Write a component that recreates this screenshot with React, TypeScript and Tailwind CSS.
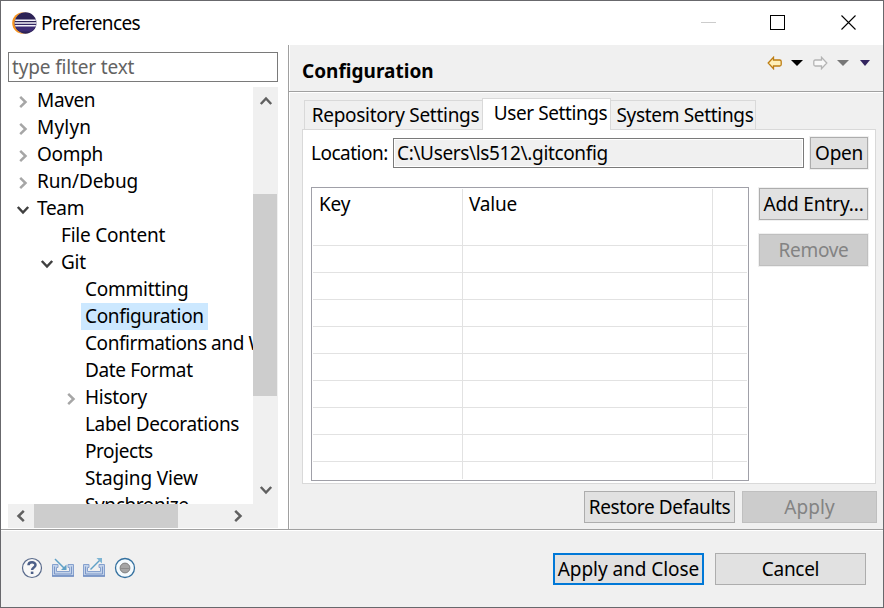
import React from "react";
import clsx from "clsx";

type Row = { label: string; level: 0 | 1 | 2; state?: "open" | "closed"; selected?: boolean; track: string };

const rows: Row[] = [
  { label: "Maven", level: 0, state: "closed", track: "tracking-[-0.35px]" },
  { label: "Mylyn", level: 0, state: "closed", track: "tracking-[0.2px]" },
  { label: "Oomph", level: 0, state: "closed", track: "tracking-[-0.3px]" },
  { label: "Run/Debug", level: 0, state: "closed", track: "tracking-[-0.1px]" },
  { label: "Team", level: 0, state: "open", track: "tracking-[-0.3px]" },
  { label: "File Content", level: 1, track: "tracking-[-0.22px]" },
  { label: "Git", level: 1, state: "open", track: "tracking-[-0.3px]" },
  { label: "Committing", level: 2, track: "tracking-[-0.25px]" },
  { label: "Configuration", level: 2, selected: true, track: "tracking-[-0.35px]" },
  { label: "Confirmations and Warnings", level: 2, track: "tracking-[-0.42px]" },
  { label: "Date Format", level: 2, track: "tracking-[-0.35px]" },
  { label: "History", level: 2, state: "closed", track: "tracking-[-0.3px]" },
  { label: "Label Decorations", level: 2, track: "tracking-[-0.37px]" },
  { label: "Projects", level: 2, track: "tracking-[-0.42px]" },
  { label: "Staging View", level: 2, track: "tracking-[-0.15px]" },
  { label: "Synchronize", level: 2, track: "tracking-[-0.4px]" },
];

const indent = { 0: "pl-0", 1: "pl-6", 2: "pl-12" };

function Chevron({ dir, className }: { dir: "up" | "down" | "left" | "right"; className?: string }) {
  const d = {
    up: "M1.800 10 7 4.500l5.200 5.500",
    down: "M1.800 4 7 9.500l5.200-5.500",
    left: "M9.800 1.800 4.500 7l5.300 5.200",
    right: "M4.200 1.800 9.500 7l-5.300 5.200",
  }[dir];
  return (
    <svg width="14" height="14" viewBox="0 0 14 14" fill="none" stroke="currentColor" strokeWidth="2.500" className={clsx("shrink-0", className)}>
      <path d={d} />
    </svg>
  );
}

function TreeRow({ row }: { row: Row }) {
  return (
    <div className={clsx("flex h-[27px] items-center whitespace-nowrap", indent[row.level])}>
      <span className="flex w-[25px] shrink-0 justify-center pl-1">
        {row.state === "closed" && <Chevron dir="right" className="mt-0.5 text-[#a6a6a6]" />}
        {row.state === "open" && <Chevron dir="down" className="mt-0.5 text-[#404040]" />}
      </span>
      <span className={clsx("h-[27px] px-1", row.track, row.selected && "bg-[#cce8ff]")}>{row.label}</span>
    </div>
  );
}

function Button({ children, className }: { children: React.ReactNode; className?: string }) {
  return (
    <button className={clsx("flex h-8 shrink-0 items-center justify-center whitespace-nowrap border", className)}>
      {children}
    </button>
  );
}

const normal = "border-[#adadad] bg-[#e1e1e1]";
const disabled = "border-[#bfbfbf] bg-[#cccccc] text-[#838383]";

function EclipseLogo() {
  return (
    <svg width="25" height="22" viewBox="0 0 25 22">
      <ellipse cx="11.500" cy="11" rx="11.300" ry="10.800" fill="#f7941e" />
      <ellipse cx="14.100" cy="11" rx="11.500" ry="11" fill="#fff" opacity=".6" />
      <ellipse cx="13.500" cy="11" rx="11" ry="10.700" fill="#2c2255" />
      <path d="M3 12.500h21q-1 5-5 7H8q-4-2-5-7z" fill="#3d2c75" />
      <path d="M3.200 8.200h20.600M2.700 11h21.800M3.200 13.800h20.600" stroke="#f4f2fa" strokeWidth="1.500" />
    </svg>
  );
}

function Tray({ out }: { out?: boolean }) {
  return (
    <svg width="22" height="20" viewBox="0 0 22 20" fill="none">
      <path d="M.5 7.500h5.500v3H4.500v4h13v-4H16v-3h5.500v11.500H.5z" fill="#c3d3ea" stroke="#86a1ce" />
      <path d="M2.500 9.500v7.500h17V9.500" stroke="#7c97c8" />
      <path d="M0 19h22" stroke="#6f8dc2" strokeWidth="1.500" />
      {out ? (
        <>
          <path d="M7.500 12.500 17 3" stroke="#5fa0c6" strokeWidth="1.500" />
          <path d="M13.500 1h5.500v5.500z" fill="#7db4d3" />
        </>
      ) : (
        <>
          <path d="M3 2 13 12" stroke="#5fa0c6" strokeWidth="1.500" />
          <path d="M14.500 7.500V13H9z" fill="#5fa0c6" />
        </>
      )}
    </svg>
  );
}

function Arrow({ left }: { left?: boolean }) {
  return (
    <svg width="16" height="14" viewBox="0 0 16 14">
      {left ? (
        <path d="M1.200 7 6.500 1.300V4h6.200q1.500 0 1.500 1.500v3q0 1.500-1.500 1.500H6.500v2.700z" fill="#fff0b8" stroke="#bd7d12" strokeWidth="1.300" />
      ) : (
        <path d="M14.800 7 9.500 1.300V4H3.300Q1.800 4 1.800 5.500v3q0 1.500 1.500 1.500h6.200v2.700z" fill="#f8f8f8" stroke="#b4b4b4" strokeWidth="1.300" />
      )}
    </svg>
  );
}

function Triangle({ className }: { className: string }) {
  return (
    <svg width="12" height="6" viewBox="0 0 12 6" preserveAspectRatio="none" className={className}>
      <path d="M0 0h12L6 6z" fill="currentColor" />
    </svg>
  );
}

const bodyRows = [1, 2, 3, 4, 5, 6, 7, 8];

export default function App() {
  return (
    <div className="flex h-[608px] w-[884px] flex-col overflow-hidden border border-[#68686c] bg-white font-['Noto_Sans','Open_Sans',sans-serif] text-[19px] leading-[27px] text-black">
      <header className="flex h-11 shrink-0 items-center pl-[11px]">
        <EclipseLogo />
        <h1 className="ml-1 grow tracking-[-0.62px]">Preferences</h1>
        <svg width="182" height="44" viewBox="0 0 182 44" fill="none" shapeRendering="crispEdges">
          <path d="M0 21.500h15" stroke="#ccc" />
          <path d="M69.500 14.500h14v14h-14z" stroke="#000" />
          <path d="m140.500 14.500 14 14m0-14-14 14" stroke="#000" shapeRendering="auto" strokeWidth="1.100" />
        </svg>
      </header>

      <main className="flex h-[484px] shrink-0">
        <aside className="flex w-[287px] shrink-0 flex-col pl-[7px] pt-[7px]">
          <div className="flex h-[30px] w-[270px] shrink-0 items-center border border-[#7a7a7a] pl-[3px] text-[#636363]">
            <span className="tracking-[-0.15px]">type filter text</span>
          </div>
          <div className="mt-[5px] flex h-[417px] w-[270px]">
            <div className="h-[417px] w-[245px] overflow-hidden">
              {rows.map((r) => (
                <TreeRow key={r.label} row={r} />
              ))}
            </div>
            <div className="flex w-[25px] flex-col items-center justify-between bg-[#f0f0f0] text-[#606060]">
              <div className="flex h-[107px] pt-[7px]"><Chevron dir="up" /></div>
              <div className="h-[202px] w-6 self-start bg-[#cdcdcd]" />
              <div className="flex h-[108px] items-end pb-[7px]"><Chevron dir="down" /></div>
            </div>
          </div>
          <div className="flex h-6 w-[270px] items-center bg-[#f0f0f0] text-[#606060]">
            <span className="flex w-[26px] justify-center"><Chevron dir="left" /></span>
            <span className="h-6 w-36 bg-[#cdcdcd]" />
            <Chevron dir="right" className="ml-[53px]" />
          </div>
        </aside>

        <section className="flex grow flex-col border-l border-[#a0a0a0]">
          <div className="flex h-[47px] shrink-0 items-center border-b border-[#a0a0a0] bg-[#f0f0f0] pl-[13px] shadow-[inset_1px_0_0_white]">
            <h2 className="mt-1.5 grow font-bold tracking-[0.02px]">Configuration</h2>
            <div className="mb-[11px] flex w-[116px] shrink-0 items-center">
              <Arrow left />
              <Triangle className="ml-[8px] text-black" />
              <span className="ml-[9px] flex"><Arrow /></span>
              <Triangle className="ml-[9px] text-[#777]" />
              <Triangle className="ml-[11px] w-[10px] text-[#33255f]" />
            </div>
          </div>

          <div className="flex grow flex-col border-t border-white bg-[#f0f0f0] pl-[13px] shadow-[inset_1px_0_0_white]">
            <div className="mt-1 flex h-8 items-end pl-0.5">
              <div className="flex h-[29px] w-[178px] items-center justify-center whitespace-nowrap border border-b-0 border-r-0 border-[#d9d9d9] pl-1">
                <span className="tracking-[-0.27px]">Repository Settings</span>
              </div>
              <div className="z-10 -mb-px flex h-8 w-[129px] items-center justify-center whitespace-nowrap border border-b-0 border-[#d9d9d9] bg-white pb-0.5 pl-2">
                <span className="tracking-[-0.42px]">User Settings</span>
              </div>
              <div className="flex h-[29px] w-[145px] items-center justify-center whitespace-nowrap border border-b-0 border-l-0 border-[#d9d9d9] pl-1">
                <span className="tracking-[-0.32px]">System Settings</span>
              </div>
            </div>
            <div className="h-[355px] w-[574px] border border-[#d9d9d9] bg-white pl-2 pt-[7px]">
              <div className="flex h-8 w-[557px] items-center">
                <span className="w-[82px] shrink-0 tracking-[-0.5px]">Location:</span>
                <div className="flex h-[30px] w-[411px] items-center border border-[#7a7a7a] bg-[#f0f0f0] pl-[3px] shadow-[inset_0_0_0_1px_white]">
                  <span className="tracking-[-0.35px]">C:\Users\ls512\.gitconfig</span>
                </div>
                <Button className={clsx("ml-1.5 w-[58px] tracking-[-0.3px] shadow-[0_0_0_1px_#f0f0f0]", normal)}>Open</Button>
              </div>
              <div className="mt-[18px] flex w-[557px] justify-between">
                <div className="h-[294px] w-[438px] border border-[#a0a0a8] p-px">
                  <div className="flex h-[290px]">
                    {[
                      { w: "w-[150px]", title: "Key" },
                      { w: "w-[250px]", title: "Value" },
                      { w: "w-[34px]", title: "" },
                    ].map((c) => (
                      <div key={c.w} className={clsx(c.w, "border-r border-[#e2e2e2] last:border-r-0")}>
                        <div className="h-[57px] border-b border-[#e2e2e2] pl-1.5 pt-0.5 tracking-[-0.2px]">{c.title}</div>
                        {bodyRows.map((n) => (
                          <div key={n} className="h-[27px] border-b border-[#e2e2e2]" />
                        ))}
                      </div>
                    ))}
                  </div>
                </div>
                <div className="flex flex-col gap-3.5 pt-px">
                  <Button className={clsx("w-[109px] tracking-[-0.12px] shadow-[0_0_0_1px_#f0f0f0]", normal)}>Add Entry...</Button>
                  <Button className={clsx("w-[109px] tracking-[-0.3px] shadow-[0_0_0_1px_#f0f0f0]", disabled)}>Remove</Button>
                </div>
              </div>
            </div>
            <div className="mt-[7px] flex gap-[7px] pl-[282px]">
              <Button className={clsx("w-[151px] tracking-[-0.38px]", normal)}>Restore Defaults</Button>
              <Button className={clsx("w-[135px] tracking-[0.1px]", disabled)}>Apply</Button>
            </div>
          </div>
        </section>
      </main>

      <footer className="flex grow border-t border-[#a0a0a0] bg-[#f0f0f0] shadow-[inset_0_1px_0_white]">
        <div className="flex grow gap-[9px] pl-[21px] pt-[27px]">
          <svg width="22" height="22" viewBox="0 0 22 22" fill="none" className="-ml-px">
            <circle cx="11" cy="11" r="9.500" fill="#f8f8f8" stroke="#5a6b8c" strokeWidth="1.200" />
            <path d="M7.500 8.300c0-4 7-4 7-.300 0 2.500-3.400 2.500-3.400 5" stroke="#4c5f88" strokeWidth="2.500" />
            <path d="M9.800 14.600h2.600v2.400H9.800z" fill="#4c5f88" />
          </svg>
          <Tray />
          <Tray out />
          <svg width="22" height="22" viewBox="0 0 22 22">
            <circle cx="11" cy="11" r="9.500" fill="#f4fafd" stroke="#33709f" strokeWidth="1.300" />
            <circle cx="11" cy="11" r="4.900" fill="#a5a5a5" stroke="#808080" strokeWidth="1" />
            <path d="M6.500 11.500h9" stroke="#8b8b8b" />
          </svg>
        </div>
        <div className="flex w-[330px] shrink-0 gap-[11px] pt-[23px]">
          <Button className="w-[151px] border-2 border-[#0078d7] bg-[#e1e1e1] tracking-[-0.05px]">Apply and Close</Button>
          <Button className={clsx("w-[151px] tracking-[-0.3px]", normal)}>Cancel</Button>
        </div>
      </footer>
    </div>
  );
}
